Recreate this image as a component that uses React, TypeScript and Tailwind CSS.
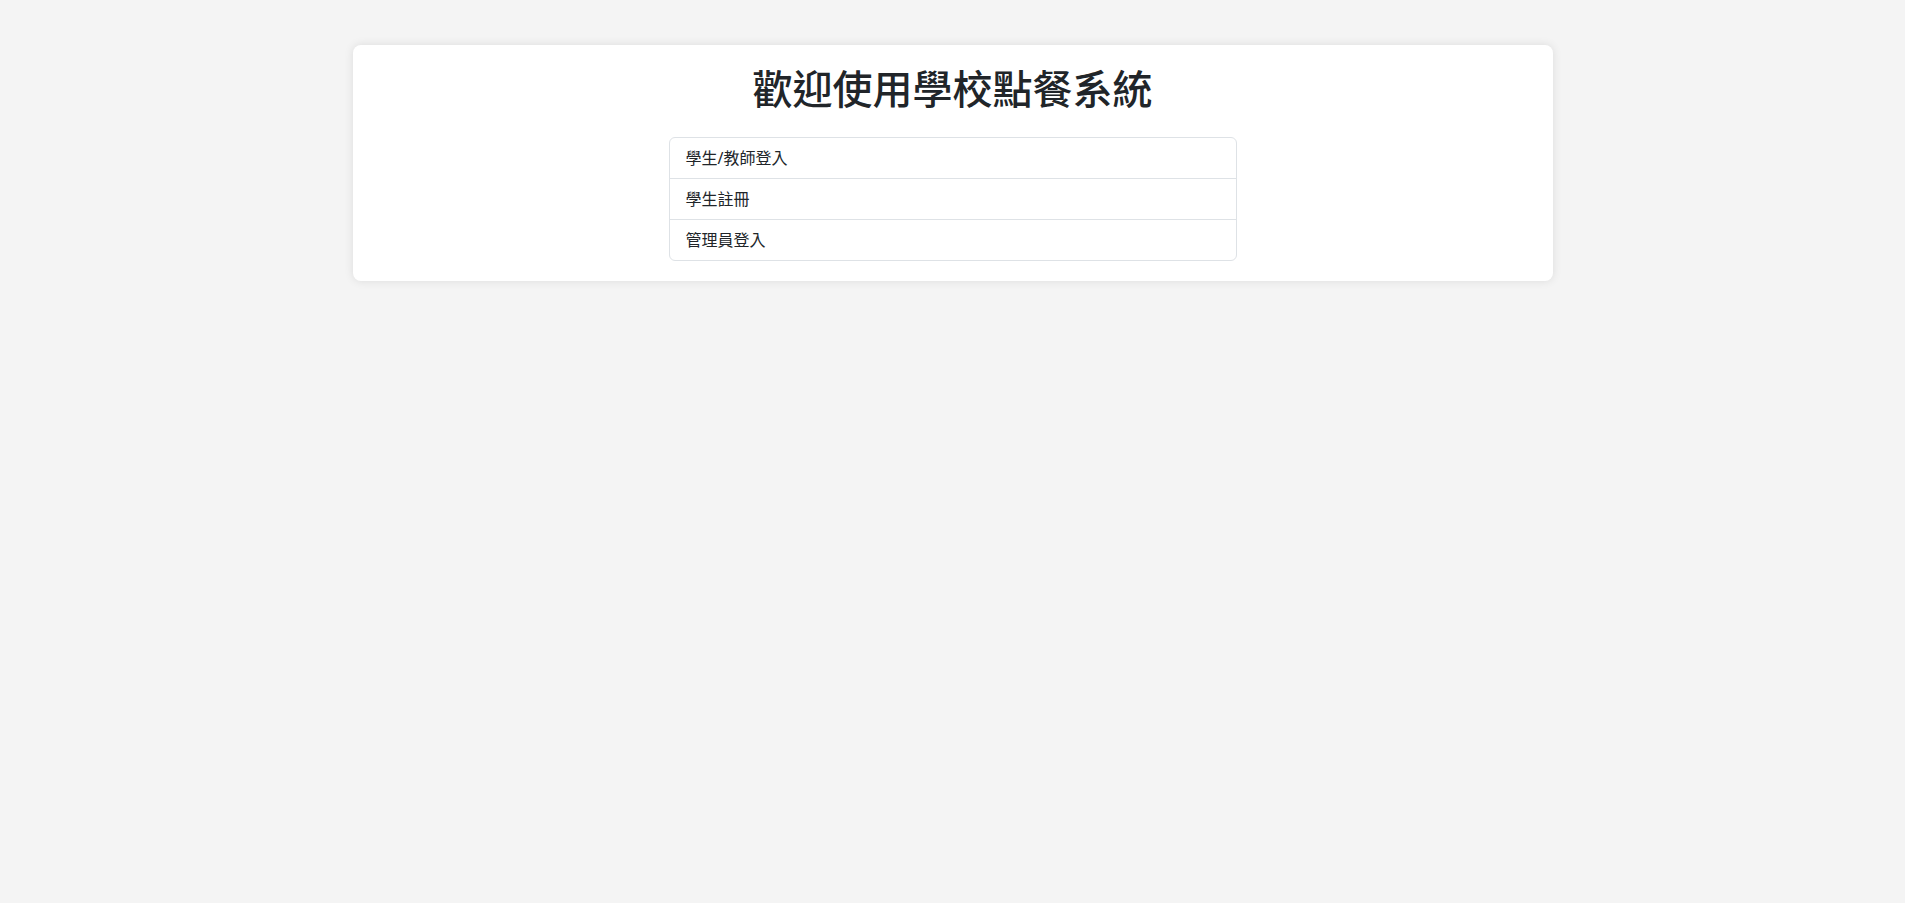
const items = ["學生/教師登入", "學生註冊", "管理員登入"];

export default function App() {
  return (
    <div
      className="min-h-[903px] bg-[#f4f4f4] pt-[45px] text-[#212529]"
      style={{ fontFamily: '"Noto Sans", "Noto Sans CJK TC", sans-serif' }}
    >
      <div className="mx-auto w-[1200px] rounded-lg bg-white p-5 shadow-[0_0_10px_rgba(0,0,0,0.1)]">
        <h1 className="mb-6 text-center text-[40px] leading-[1.2] font-medium">
          歡迎使用學校點餐系統
        </h1>
        <div className="flex justify-center">
          <ul className="w-[568px] overflow-hidden rounded-md border border-[#dee2e6]">
            {items.map((label, i) => (
              <li
                key={label}
                className={`px-4 py-2 text-base leading-6 ${
                  i > 0 ? "border-t border-[#dee2e6]" : ""
                }`}
              >
                {label}
              </li>
            ))}
          </ul>
        </div>
      </div>
    </div>
  );
}
